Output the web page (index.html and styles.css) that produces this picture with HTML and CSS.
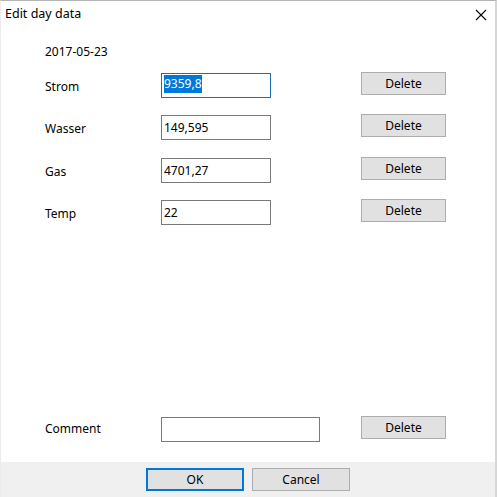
FILE: index.html
```html
<!DOCTYPE html>
<html>
<head>
<meta charset="utf-8">
<link rel="stylesheet" href="styles.css">
</head>
<body>
<div class="window">
  <div class="titlebar">
    <span class="title">Edit day data</span>
    <svg class="close" width="12" height="12" viewBox="0 0 12 12"><path d="M1 1 L11 11 M11 1 L1 11" stroke="#000" stroke-width="1.1" fill="none"/></svg>
  </div>
  <div class="content">
    <div class="date">2017-05-23</div>
    <div class="rows">
      <div class="row">
        <span class="label">Strom</span>
        <div class="textbox focused"><span class="sel">9359,8</span></div>
        <div class="btn">Delete</div>
      </div>
      <div class="row">
        <span class="label">Wasser</span>
        <div class="textbox">149,595</div>
        <div class="btn">Delete</div>
      </div>
      <div class="row">
        <span class="label">Gas</span>
        <div class="textbox">4701,27</div>
        <div class="btn">Delete</div>
      </div>
      <div class="row">
        <span class="label">Temp</span>
        <div class="textbox">22</div>
        <div class="btn">Delete</div>
      </div>
    </div>
    <div class="row comment-row">
      <span class="label comment-label">Comment</span>
      <div class="textbox wide"></div>
      <div class="btn">Delete</div>
    </div>
  </div>
  <div class="footer">
    <div class="btn footer-btn default">OK</div>
    <div class="btn footer-btn">Cancel</div>
  </div>
</div>
</body>
</html>
```

FILE: styles.css
```css
* { box-sizing: border-box; }
html, body { margin: 0; padding: 0; background: #fff; }
body {
  font-family: "Noto Sans", "Open Sans", sans-serif;
  font-size: 12px;
  color: #000;
}
.window {
  width: 497px;
  height: 497px;
  display: flex;
  flex-direction: column;
  border-top: 1px solid #b4b4b4;
  border-right: 2px solid #d6d6d6;
  border-left: 1px solid #ececec;
  background: #fff;
}
.titlebar {
  height: 29px;
  display: flex;
  align-items: center;
  justify-content: space-between;
  padding: 0 8px 4px 4px;
}
.title { line-height: 16px; font-size: 12.5px; }
.close { display: block; margin-top: 2px; }
.content {
  flex: 1;
  display: flex;
  flex-direction: column;
  padding: 14px 0 21px 44px;
}
.date { line-height: 16px; }
.rows {
  margin-top: 12px;
  display: flex;
  flex-direction: column;
  gap: 17.33px;
}
.row {
  display: grid;
  grid-template-columns: 116px 200px 85px;
  align-items: start;
  height: 25px;
}
.label {
  line-height: 24px;
  margin-top: 3px;
}
.comment-label { margin-top: 1px; }
.textbox {
  margin-top: 1px;
  width: 110px;
  height: 25px;
  border: 1px solid #7a7a7a;
  padding: 0 2px;
  line-height: 23px;
  white-space: nowrap;
}
.textbox.focused { border-color: #1a6fb5; }
.textbox.wide { width: 159px; }
.sel {
  background: #0078d7;
  color: #fff;
  display: inline-block;
  line-height: 18px;
  vertical-align: top;
  margin-top: 1px;
}
.btn {
  width: 85px;
  height: 23px;
  background: #e1e1e1;
  border: 1px solid #adadad;
  text-align: center;
  line-height: 21px;
}
.comment-row { margin-top: auto; }
.footer {
  height: 35px;
  background: #f0f0f0;
  display: flex;
  justify-content: center;
  gap: 8px;
  padding-top: 6px;
}
.footer-btn {
  width: 98px;
  height: 23px;
}
.footer-btn.default {
  border: 2px solid #0078d7;
  line-height: 19px;
}
```
